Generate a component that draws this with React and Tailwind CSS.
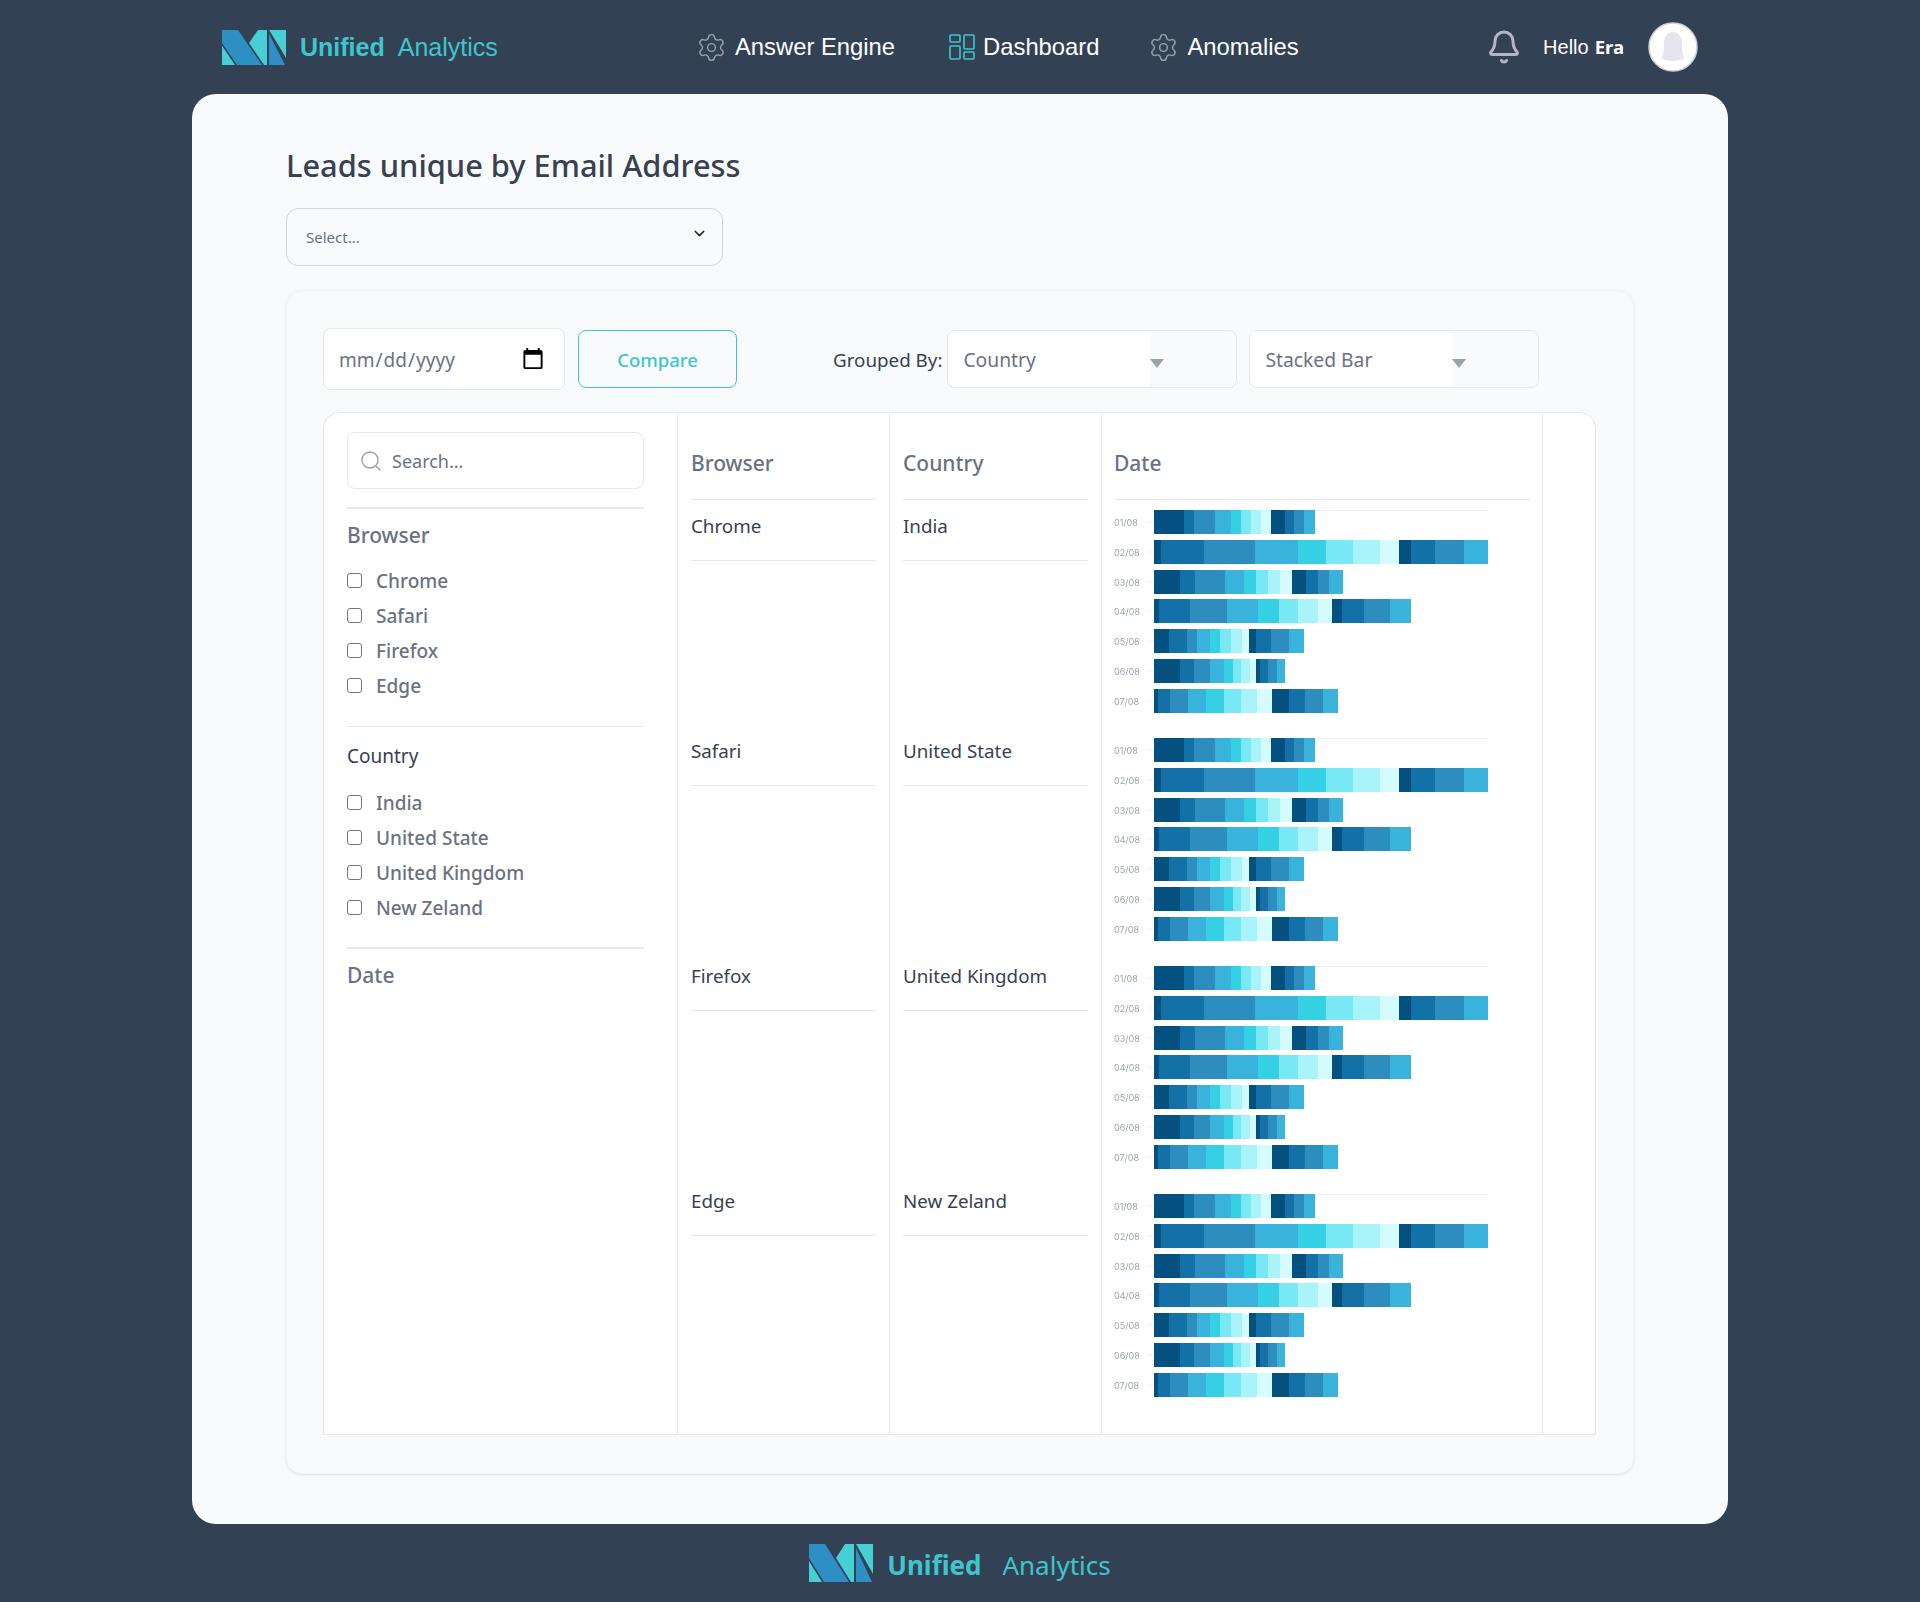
import { ChevronDown, Bell, Search, Settings } from "lucide-react";

const colors = ["#04517f", "#1471a8", "#2e8dbf", "#39b2dc", "#36d0e4", "#79e8f5", "#a8f4fa", "#d4fbfe", "#04517f", "#1471a8", "#2e8dbf", "#39b2dc"];

// segment edges of each bar, px from the start of the plot
const bars = [
  { label: "01/08", y: 0, edges: [0, 30, 40, 61, 77, 87, 97, 107, 117, 131, 140, 150, 161] },
  { label: "02/08", y: 30, edges: [0, 7, 50, 101, 144, 172, 199, 226, 245, 257, 281, 310, 334] },
  { label: "03/08", y: 60, edges: [0, 26, 41, 71, 90, 102, 114, 126, 138, 152, 164, 175, 189] },
  { label: "04/08", y: 89, edges: [0, 5, 36, 73, 104, 125, 144, 164, 178, 188, 210, 236, 257] },
  { label: "05/08", y: 119, edges: [0, 15, 33, 43, 56, 66, 77, 88, 95, 102, 117, 135, 150] },
  { label: "06/08", y: 149, edges: [0, 26, 40, 56, 70, 79, 87, 96, 102, 106, 114, 123, 131] },
  { label: "07/08", y: 179, edges: [0, 4, 16, 34, 52, 70, 87, 103, 118, 135, 151, 169, 184] },
];

const rows = [
  ["Chrome", "India"],
  ["Safari", "United State"],
  ["Firefox", "United Kingdom"],
  ["Edge", "New Zeland"],
];

const Logo = ({ className }) => (
  <svg viewBox="0 0 64 38" preserveAspectRatio="none" className={className}>
    <polygon points="0,0 16,0 40,38 15,38 0,14" fill="#2e8fc4" />
    <polygon points="0,17 13,38 0,38" fill="#46cfd4" />
    <polygon points="27,14 36,0 45,0 45,38 42,38" fill="#46cfd4" />
    <polygon points="47,0 64,0 64,30" fill="#46cfd4" />
    <polygon points="47,4 63,38 47,38" fill="#2e8fc4" />
  </svg>
);

const DashboardIcon = () => (
  <svg viewBox="0 0 26 26" className="h-[26px] w-[26px]" fill="none" stroke="#3fc6cc" strokeWidth="1.6">
    <rect x="1" y="1" width="10" height="7" rx="1" />
    <rect x="15" y="1" width="10" height="14" rx="1" />
    <rect x="1" y="12" width="10" height="13" rx="1" />
    <rect x="15" y="18" width="10" height="7" rx="1" />
  </svg>
);

const Avatar = () => (
  <svg viewBox="0 0 50 50" className="h-[50px] w-[50px]">
    <circle cx="25" cy="25" r="24" fill="#ffffff" stroke="#cfcddb" strokeWidth="1.5" />
    <path
      d="M25 10C18 10 16 16 16 23C16 30 15.500 34 13 36C16 38 21 39 25 39C29 39 34 38 37 36C34.500 34 34 30 34 23C34 16 32 10 25 10Z"
      fill="#e6e4ef"
    />
  </svg>
);

const NavItem = ({ icon, label, className = "" }) => (
  <div className={`flex items-center gap-[8px] text-[23.8px] text-white ${className}`}>
    {icon}
    <span>{label}</span>
  </div>
);

const CheckItem = ({ label }) => (
  <label className="flex h-[35px] items-center gap-[14px] text-[19px] font-medium text-gray-500">
    <input
      type="checkbox"
      className="-mt-[2px] h-[15px] w-[15px] appearance-none rounded-[3px] border border-[#767676] bg-white"
    />
    {label}
  </label>
);

const Chart = () => (
  <svg viewBox="0 0 441 228" className="block h-[228px] w-[441px] blur-[0.4px]">
    <line x1="52" x2="386" y1="0.5" y2="0.5" stroke="#eeeeee" />
    {bars.map((bar) => (
      <g key={bar.label}>
        <text x="12" y={bar.y + 16} fontSize="9" fill="#9ca3af" fontFamily="Inter, sans-serif">
          {bar.label}
        </text>
        <line x1="46" x2="52" y1={bar.y + 12} y2={bar.y + 12} stroke="#f1f1f1" />
        {colors.map((color, i) => (
          <rect key={i} x={52 + bar.edges[i]} y={bar.y} width={bar.edges[i + 1] - bar.edges[i]} height="24" fill={color} />
        ))}
      </g>
    ))}
  </svg>
);

const SelectBox = ({ label }) => (
  <div className="flex h-[58px] w-[290px] overflow-hidden rounded-lg border border-gray-200">
    <div className="flex w-[202px] items-center bg-white pl-[15px] pt-[2px] text-[19.300px] text-gray-500">{label}</div>
    <div className="mt-[28px] h-0 w-0 border-x-[7px] border-t-[9px] border-x-transparent border-t-gray-400" />
  </div>
);

const TextColumn = ({ title, index }) => (
  <div className="w-[212px] border-r border-gray-200">
    <div className="mx-[13px] flex h-[87px] items-center border-b border-gray-200 pt-[15px] text-[21px] font-medium text-gray-500">
      {title}
    </div>
    {rows.map((row) => (
      <div key={row[0]} className="h-[225px]">
        <div className="mx-[13px] flex h-[61px] items-center border-b border-gray-200 pb-[7px] text-[18.8px] text-gray-700">
          {row[index]}
        </div>
      </div>
    ))}
  </div>
);

export default function App() {
  return (
    <div className="flex min-h-[1602px] flex-col items-center bg-[#334155] font-['Noto_Sans',sans-serif]">
      <header className="relative flex h-[94px] w-full items-center pl-[222px] pr-[222px] font-['Liberation_Sans',sans-serif]">
        <div className="flex w-[474px] items-center text-[25px] text-[#3fc6cc]">
          <Logo className="h-[35px] w-[64px]" />
          <span className="ml-[14px] mt-[2px] font-bold">Unified</span>
          <span className="ml-[13px] mt-[2px]">Analytics</span>
        </div>
        <nav className="flex items-center gap-[54px]">
          <NavItem icon={<Settings size={31} strokeWidth={1.1} className="text-gray-400" />} label="Answer Engine" />
          <NavItem icon={<DashboardIcon />} label="Dashboard" />
          <NavItem
            icon={<Settings size={31} strokeWidth={1.1} className="text-gray-400" />}
            label="Anomalies"
            className="-ml-[5px]"
          />
        </nav>
        <div className="ml-auto flex items-center">
          <Bell size={36} strokeWidth={2} className="text-[#b5b5c8]" />
          <span className="ml-[21px] text-[20px] text-white">Hello</span>
          <span className="ml-[6px] font-['Noto_Sans',sans-serif] text-[18.5px] font-bold text-white">Era</span>
          <div className="ml-[24px]">
            <Avatar />
          </div>
        </div>
      </header>

      <main className="w-[1536px] rounded-[24px] bg-[#f9fafb] px-[94px] pb-[50px] pt-[47px]">
        <h1 className="text-[30.8px] font-medium leading-[48px] text-[#374151]">Leads unique by Email Address</h1>
        <div className="mt-[19px] flex h-[58px] w-[437px] items-center justify-between rounded-xl border border-gray-300 pl-[19px] pr-[14px] text-[15px] text-gray-500">
          <span>Select...</span>
          <ChevronDown size={17} strokeWidth={2} className="mb-[8px] text-gray-800" />
        </div>

        <section className="mt-[24px] h-[1184px] rounded-2xl border border-gray-100 pl-[36px] pr-[37px] pt-[37px] shadow-sm">
          <div className="flex h-[61px] items-start">
            <input
              type="date"
              className="h-[62px] w-[242px] rounded-lg border border-gray-200 bg-white pl-[14px] pr-[17px] pt-[2px] text-[19px] text-gray-500 [&::-webkit-calendar-picker-indicator]:-mt-[2px] [&::-webkit-calendar-picker-indicator]:h-[24px] [&::-webkit-calendar-picker-indicator]:w-[24px]"
            />
            <button className="ml-[13px] mt-[2px] h-[58px] w-[159px] rounded-lg border border-[#3fc6cc] pt-[2px] text-[18.5px] font-medium text-[#3fc6cc]">
              Compare
            </button>
            <div className="ml-[96px] mt-[2px] flex h-[58px] items-center gap-[5px] text-[18.8px] text-gray-700">
              <span className="pt-[2px]">Grouped By:</span>
              <SelectBox label="Country" />
            </div>
            <div className="ml-[12px] mt-[2px]">
              <SelectBox label="Stacked Bar" />
            </div>
          </div>

          <div className="mt-[23px] flex h-[1023px] rounded-t-2xl border border-gray-200 bg-white">
            <aside className="w-[354px] border-r border-gray-200 px-[23px] pt-[19px]">
              <div className="flex h-[57px] w-[297px] items-center gap-[9px] rounded-lg border border-gray-200 pl-[11px]">
                <Search size={24} strokeWidth={1.4} className="text-gray-400" />
                <input placeholder="Search..." className="w-[220px] pt-[2px] text-[18px] outline-none placeholder:text-gray-500" />
              </div>
              <div className="mt-[18px] w-[297px] border-t-2 border-gray-200 pt-[11px]">
                <h3 className="mb-[14px] text-[21px] font-medium leading-[30px] text-gray-500">Browser</h3>
                {["Chrome", "Safari", "Firefox", "Edge"].map((name) => (
                  <CheckItem key={name} label={name} />
                ))}
              </div>
              <div className="mt-[22px] w-[297px] border-t border-gray-200 pt-[14px]">
                <h3 className="mb-[15px] text-[19px] leading-[30px] text-gray-700">Country</h3>
                {["India", "United State", "United Kingdom", "New Zeland"].map((name) => (
                  <CheckItem key={name} label={name} />
                ))}
              </div>
              <div className="mt-[21px] w-[297px] border-t-2 border-gray-200 pt-[11px]">
                <h3 className="text-[21px] font-medium leading-[30px] text-gray-500">Date</h3>
              </div>
            </aside>

            <TextColumn title="Browser" index={0} />
            <TextColumn title="Country" index={1} />

            <div className="w-[441px] border-r border-gray-200">
              <div className="mx-[12px] flex h-[87px] items-center border-b border-gray-200 pt-[15px] text-[21px] font-medium text-gray-500">
                Date
              </div>
              <div className="pt-[10px]">
                <Chart />
                <Chart />
                <Chart />
                <Chart />
              </div>
            </div>
          </div>
        </section>
      </main>

      <footer className="flex flex-1 items-center text-[26px] text-[#3fc6cc]">
        <Logo className="h-[38px] w-[64px]" />
        <span className="ml-[14px] mt-[5px] font-bold">Unified</span>
        <span className="ml-[21px] mt-[5px]">Analytics</span>
      </footer>
    </div>
  );
}
